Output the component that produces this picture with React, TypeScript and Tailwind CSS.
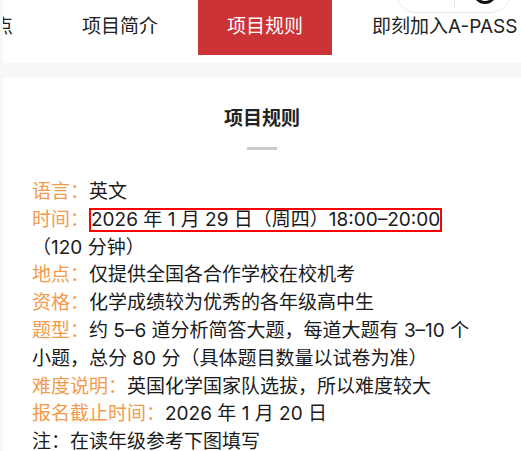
const font = "font-['Inter','Noto_Sans_CJK_SC',sans-serif]";

const tabs = ["项目亮点", "项目简介", "项目规则", "即刻加入A-PASS"];
const active = "项目规则";

function Capsule() {
  return (
    <div className="absolute right-[9px] top-[-31px] h-[44px] w-[117px] rounded-full border border-[#e8e8e8] bg-white">
      <div className="absolute left-[58px] top-[9px] h-[28px] w-px bg-[#e6e6e6]" />
      <svg className="absolute left-[75px] top-[8px]" width="28" height="28" viewBox="0 0 28 28">
        <circle cx="14" cy="14" r="10.5" fill="none" stroke="#111" strokeWidth="3" />
        <circle cx="14" cy="14" r="3.5" fill="#111" />
      </svg>
    </div>
  );
}

function Label({ children }: { children: React.ReactNode }) {
  return <span className="text-[#f49a4c]">{children}</span>;
}

export default function App() {
  return (
    <div className={`relative h-[451px] overflow-hidden bg-[#f7f7f7] pl-[3px] ${font}`}>
      <nav className="relative h-[63px] overflow-hidden bg-white">
        <div className="-ml-[95px] flex gap-[11px] whitespace-nowrap">
          {tabs.map((t) => (
            <div
              key={t}
              className={
                t === active
                  ? "flex h-[55px] items-center bg-[#cc3336] px-[29px] text-[19px] text-white"
                  : "flex h-[55px] items-center px-[29px] text-[19px] text-[#222]"
              }
            >
              {t}
            </div>
          ))}
        </div>
      </nav>
      <Capsule />

      <section className="mt-[15px] bg-white px-[29px] pt-[27px] pb-[20px] text-[19px] text-[#1a1a1a]">
        <h2 className="text-center text-[19px] font-bold leading-[28px] text-[#222]">项目规则</h2>
        <div className="mx-auto mt-[14px] h-[3px] w-[30px] bg-[#cccccc]" />

        <div className="mt-[28px] pr-[14px] leading-[27.8px]">
          <p>
            <Label>语言：</Label>英文
          </p>
          <p>
            <Label>时间：</Label>
            <span className="inline-block h-[24px] border-2 border-[#ff0000] leading-[20px]">
              2026 年 1 月 29 日（周四）18:00–20:00
            </span>
            <br />
            （120 分钟）
          </p>
          <p>
            <Label>地点：</Label>仅提供全国各合作学校在校机考
          </p>
          <p>
            <Label>资格：</Label>化学成绩较为优秀的各年级高中生
          </p>
          <p>
            <Label>题型：</Label>约 5–6 道分析简答大题，每道大题有 3–10 个小题，总分 80 分（具体题目数量以试卷为准）
          </p>
          <p>
            <Label>难度说明：</Label>英国化学国家队选拔，所以难度较大
          </p>
          <p>
            <Label>报名截止时间：</Label>2026 年 1 月 20 日
          </p>
          <p>注：在读年级参考下图填写</p>
        </div>
      </section>
    </div>
  );
}
